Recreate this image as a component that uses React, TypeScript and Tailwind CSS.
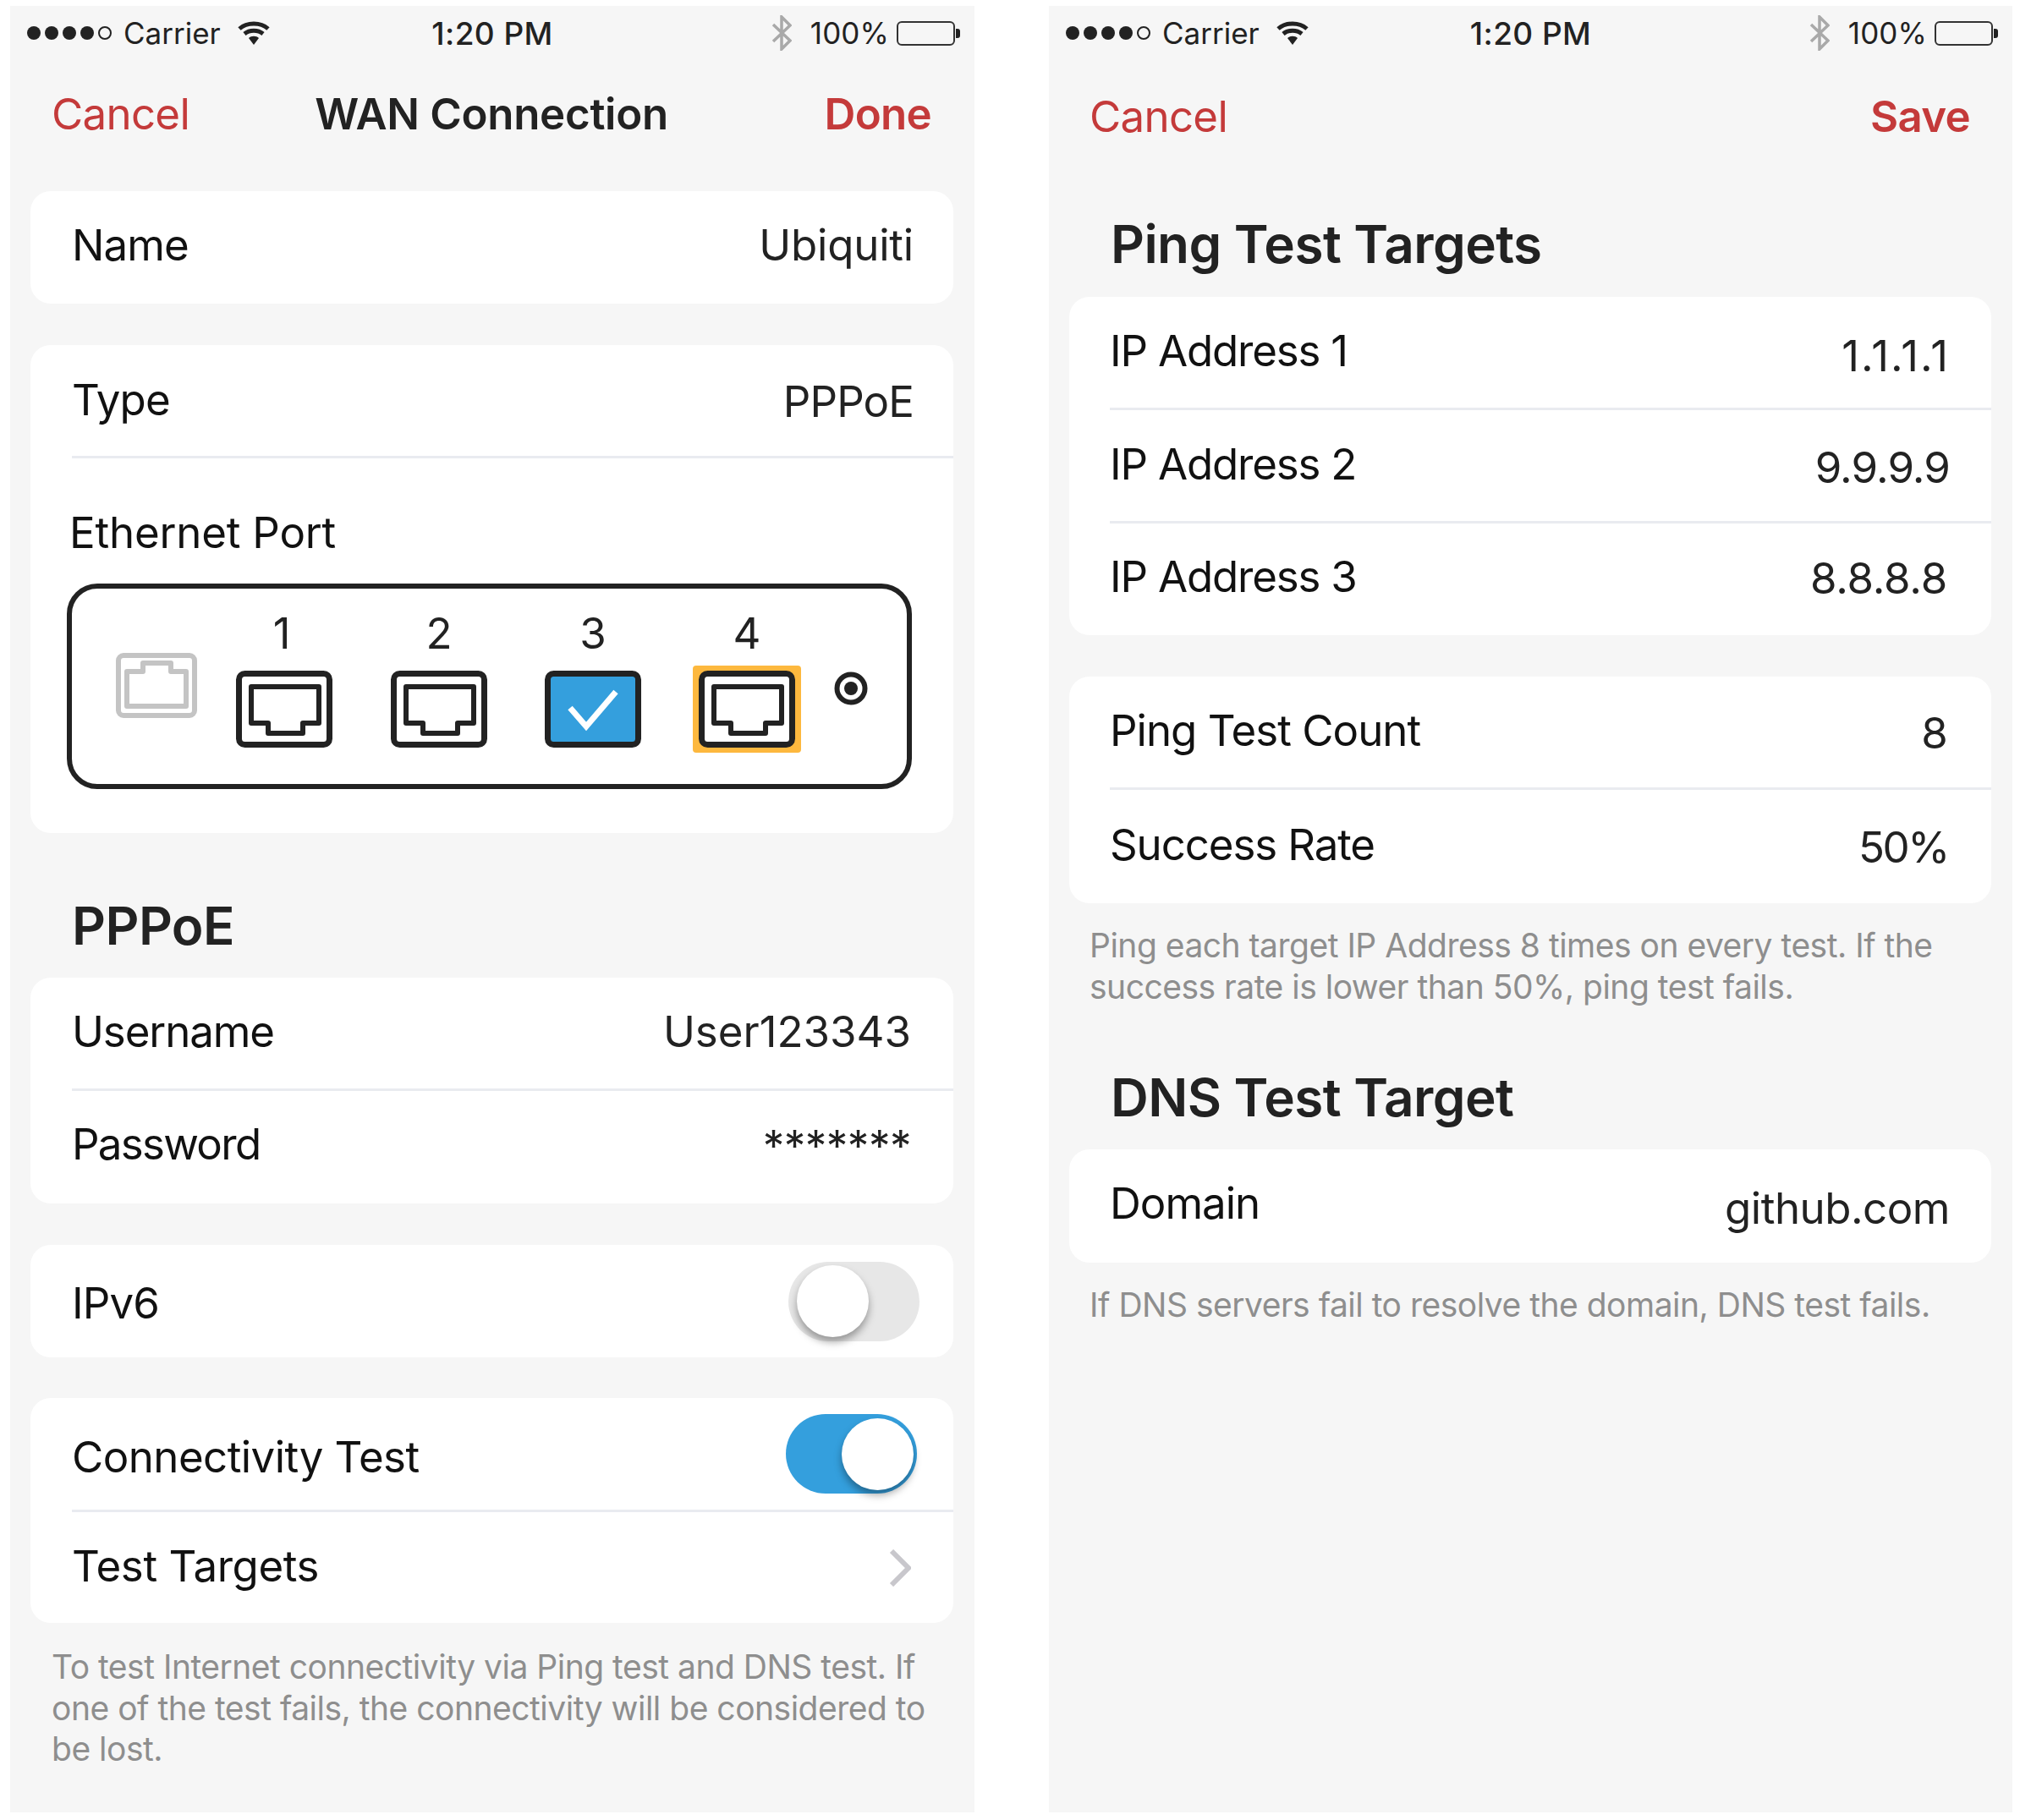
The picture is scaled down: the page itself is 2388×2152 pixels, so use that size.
import React from "react";

const font = "font-['Inter','Liberation_Sans',sans-serif]";

function Wifi() {
  return (
    <svg width="38" height="28" viewBox="0 0 38 28" className="text-[#222]">
      <path d="M2 9 C11 1 27 1 36 9" fill="none" stroke="currentColor" strokeWidth="5" />
      <path d="M8 15 C14 10 24 10 30 15" fill="none" stroke="currentColor" strokeWidth="5" />
      <path d="M13 20 C16 17 22 17 25 20 L19 28 Z" fill="currentColor" />
    </svg>
  );
}

function Bluetooth() {
  return (
    <svg width="24" height="42" viewBox="0 0 24 42">
      <path d="M2 11 L22 30 L12 40 V2 L22 12 L2 31" fill="none" stroke="#a9a9a9" strokeWidth="3.5" />
    </svg>
  );
}

function StatusBar() {
  return (
    <div className="grid h-[64px] grid-cols-[1fr_auto_1fr] items-center pl-[20px] pr-[17px] text-[35px] text-[#222]">
      <div className="flex items-center">
        <span className="flex gap-[5px]">
          <span className="h-[16px] w-[16px] rounded-full bg-[#222]" />
          <span className="h-[16px] w-[16px] rounded-full bg-[#222]" />
          <span className="h-[16px] w-[16px] rounded-full bg-[#222]" />
          <span className="h-[16px] w-[16px] rounded-full bg-[#222]" />
          <span className="h-[16px] w-[16px] rounded-full border-2 border-[#222]" />
        </span>
        <span className="ml-[14px] leading-none tracking-[0px]">Carrier</span>
        <span className="ml-[20px] flex"><Wifi /></span>
      </div>
      <span className="mr-[3px] pt-[1px] text-[37px] font-medium leading-none tracking-[0.4px]">1:20 PM</span>
      <div className="flex items-center justify-end">
        <span className="flex pr-[1px]"><Bluetooth /></span>
        <span className="ml-[21px] leading-none tracking-[0.1px]">100%</span>
        <span className="ml-[9px] h-[29px] w-[69px] rounded-[6px] border-2 border-[#333]" />
        <span className="ml-[1px] h-[11px] w-[5px] rounded-r-[3px] bg-[#222]" />
      </div>
    </div>
  );
}

function Card({ children }: { children: React.ReactNode }) {
  return <div className="ml-[24px] mr-[25px] overflow-hidden rounded-[24px] bg-white">{children}</div>;
}

function Sep({ ml = "ml-[49px]" }: { ml?: string }) {
  return <div className={`h-[3px] bg-[#e9ebf0] ${ml}`} />;
}

function Row({
  label,
  value,
  h,
  pl = "pl-[49px]",
  labelCls = "pb-[6px]",
  valueCls = "pb-[2px] pr-[47px]",
  children,
}: {
  label: string;
  value?: string;
  h: string;
  pl?: string;
  labelCls?: string;
  valueCls?: string;
  children?: React.ReactNode;
}) {
  return (
    <div className={`flex items-center justify-between text-[51px] tracking-[-0.9px] text-[#111] ${pl} ${h}`}>
      <span className={`leading-none ${labelCls}`}>{label}</span>
      {value ? <span className={`leading-none text-[#222] ${valueCls}`}>{value}</span> : null}
      {children}
    </div>
  );
}

function Title({ children, h, pl = "pl-[73px]" }: { children: React.ReactNode; h: string; pl?: string }) {
  return (
    <div className={`flex items-center text-[62px] font-semibold leading-none tracking-[-0.55px] text-[#222] ${pl} ${h}`}>
      {children}
    </div>
  );
}

function Note({ children, pad, pl = "pl-[49px]" }: { children: React.ReactNode; pad: string; pl?: string }) {
  return <p className={`pr-[30px] text-[39px] leading-[48.5px] tracking-[-0.5px] text-[#8e8e8e] ${pl} ${pad}`}>{children}</p>;
}

function PortIcon({ selected, highlighted }: { selected?: boolean; highlighted?: boolean }) {
  const svg = (
    <svg width="114" height="91" viewBox="0 0 114 91" className="block">
      <rect x="3.5" y="3.5" width="107" height="84" rx="7" fill={selected ? "#349fdd" : "#fff"} stroke="#222" strokeWidth="7" />
      {selected ? (
        <path d="M30 44 L49 66 L84 25" fill="none" stroke="#fff" strokeWidth="7" />
      ) : (
        <path d="M18 19 H98 V62 H79 V74 H38 V62 H18 Z" fill="none" stroke="#222" strokeWidth="6" strokeLinejoin="round" />
      )}
    </svg>
  );
  return highlighted ? <div className="rounded-[4px] bg-[#fdb83e] px-[7px] pb-[6px] pt-[6px]">{svg}</div> : svg;
}

function PortCol({
  n,
  cls,
  numCls = "",
  selected,
  highlighted,
}: {
  n: string;
  cls: string;
  numCls?: string;
  selected?: boolean;
  highlighted?: boolean;
}) {
  return (
    <div className={`flex flex-col items-center ${cls}`}>
      <span className={`text-[51px] leading-none text-[#222] ${numCls}`}>{n}</span>
      <div className={highlighted ? "mt-[13px]" : "mt-[19px]"}>
        <PortIcon selected={selected} highlighted={highlighted} />
      </div>
    </div>
  );
}

function EthernetBox() {
  return (
    <div className="ml-[43px] mr-[49px] flex h-[243px] rounded-[36px] border-[6px] border-[#222] pl-[52px] pt-[27px]">
      <svg width="96" height="77" viewBox="0 0 96 77" className="mt-[49px] shrink-0">
        <rect x="3" y="3" width="90" height="71" rx="6" fill="#fff" stroke="#c4c4c4" strokeWidth="6" />
        <path d="M13 22 H32 V12 H65 V22 H83 V63 H13 Z" fill="none" stroke="#c4c4c4" strokeWidth="6" strokeLinejoin="round" />
      </svg>
      <PortCol n="1" cls="ml-[46px]" numCls="pr-[6px]" />
      <PortCol n="2" cls="ml-[69px]" />
      <PortCol n="3" cls="ml-[68px]" selected />
      <PortCol n="4" cls="ml-[61px]" highlighted />
      <svg width="40" height="40" viewBox="0 0 40 40" className="ml-[39px] mt-[71px] shrink-0">
        <circle cx="20" cy="20" r="16.5" fill="#fff" stroke="#222" strokeWidth="6" />
        <circle cx="20" cy="20" r="8" fill="#222" />
      </svg>
    </div>
  );
}

function Switch({ on }: { on?: boolean }) {
  return (
    <div
      className={`flex h-[94px] w-[155px] items-center rounded-full ${
        on ? "justify-end bg-[#349fdd] pr-[4px]" : "justify-start bg-[#e7e7e7] pl-[10px]"
      }`}
    >
      <span className="h-[85px] w-[85px] rounded-full bg-white shadow-[0_6px_10px_rgba(0,0,0,0.35)]" />
    </div>
  );
}

function LeftPanel() {
  return (
    <div className={`h-[2136px] w-[1140px] bg-[#f6f6f6] ${font}`}>
      <StatusBar />
      <div className="grid h-[126px] grid-cols-[1fr_auto_1fr] items-center pl-[49px] pr-[51px] text-[51px] leading-none tracking-[-0.7px]">
        <span className="text-[#c43a3a]">Cancel</span>
        <span className="font-semibold tracking-[-0.3px] text-[#222]">WAN Connection</span>
        <span className="text-right font-semibold text-[#c43a3a]">Done</span>
      </div>
      <div className="mt-[29px]">
        <Card>
          <Row label="Name" value="Ubiquiti" h="h-[133px]" labelCls="pb-[6px]" valueCls="pb-[6px] pr-[47px] tracking-[-0.2px]" />
        </Card>
      </div>
      <div className="mt-[49px]">
        <Card>
          <Row label="Type" value="PPPoE" h="h-[131px]" labelCls="pb-[3px]" valueCls="pt-[1px] pr-[47px]" />
          <Sep />
          <div className="flex h-[148px] items-center pl-[46px] pt-[26px] text-[51px] leading-none tracking-[-0.2px] text-[#111]">
            Ethernet Port
          </div>
          <EthernetBox />
          <div className="h-[52px]" />
        </Card>
      </div>
      <Title h="h-[171px] pt-[49px]">PPPoE</Title>
      <Card>
        <Row label="Username" value="User123343" h="h-[131px]" labelCls="pb-[5px] tracking-[-1.1px]" valueCls="pb-[4px] pr-[50px] tracking-[0px]" />
        <Sep />
        <Row label="Password" value="*******" h="h-[133px]" labelCls="pb-[8px] tracking-[-1.7px]" valueCls="pb-[4px] pr-[50px] tracking-[-0.5px]" />
      </Card>
      <div className="mt-[49px]">
        <Card>
          <Row label="IPv6" h="h-[133px]" labelCls="pt-[4px]">
            <div className="mr-[40px]"><Switch /></div>
          </Row>
        </Card>
      </div>
      <div className="mt-[48px]">
        <Card>
          <Row label="Connectivity Test" h="h-[132px]" labelCls="pt-[7px] tracking-[-0.55px]">
            <div className="mr-[43px]"><Switch on /></div>
          </Row>
          <Sep />
          <Row label="Test Targets" h="h-[131px]" labelCls="pb-[4px] tracking-[-0.4px]">
            <svg width="26" height="44" viewBox="0 0 26 44" className="mr-[50px]">
              <path d="M3 2 L23 22 L3 42" fill="none" stroke="#c8c7cc" strokeWidth="6" />
            </svg>
          </Row>
        </Card>
      </div>
      <Note pad="pt-[28px]">
        To test Internet connectivity via Ping test and DNS test. If one of the test fails, the connectivity will be considered to be lost.
      </Note>
    </div>
  );
}

function RightPanel() {
  const pl = "pl-[48px]";
  const lab = "pb-[5px] tracking-[-1.2px]";
  return (
    <div className={`h-[2136px] w-[1139px] bg-[#f6f6f6] ${font}`}>
      <StatusBar />
      <div className="flex h-[132px] items-center justify-between pl-[48px] pr-[50px] text-[51px] leading-none tracking-[-0.7px]">
        <span className="text-[#c43a3a]">Cancel</span>
        <span className="font-semibold text-[#c43a3a]">Save</span>
      </div>
      <Title h="mt-[24px] h-[124px]" pl="pl-[73px]">Ping Test Targets</Title>
      <Card>
        <Row pl={pl} label="IP Address 1" value="1.1.1.1" h="h-[131px]" labelCls={lab} valueCls="pt-[7px] pr-[49px] tracking-[2px]" />
        <Sep ml="ml-[48px]" />
        <Row pl={pl} label="IP Address 2" value="9.9.9.9" h="h-[131px]" labelCls={lab} valueCls="pt-[4px] pr-[49px]" />
        <Sep ml="ml-[48px]" />
        <Row pl={pl} label="IP Address 3" value="8.8.8.8" h="h-[132px]" labelCls="pb-[7px] tracking-[-1.2px]" valueCls="pb-[3px] pr-[52px] tracking-[-0.2px]" />
      </Card>
      <div className="mt-[49px]">
        <Card>
          <Row pl={pl} label="Ping Test Count" value="8" h="h-[131px]" labelCls="pb-[4px] tracking-[-1px]" valueCls="pt-[1px] pr-[52px]" />
          <Sep ml="ml-[48px]" />
          <Row pl={pl} label="Success Rate" value="50%" h="h-[134px]" labelCls="pb-[6px] tracking-[-1.1px]" valueCls="pr-[51px] tracking-[-2.4px]" />
        </Card>
      </div>
      <Note pad="pt-[26px]" pl={pl}>
        Ping each target IP Address 8 times on every test. If the success rate is lower than 50%, ping test fails.
      </Note>
      <Title h="h-[166px] pt-[48px]" pl="pl-[73px]">DNS Test Target</Title>
      <div className="mt-[2px]">
        <Card>
          <Row pl={pl} label="Domain" value="github.com" h="h-[134px]" labelCls="pb-[8px] tracking-[-1px]" valueCls="pt-[4px] pr-[49px] tracking-[-0.5px]" />
        </Card>
      </div>
      <Note pad="pt-[26px]" pl={pl}>If DNS servers fail to resolve the domain, DNS test fails.</Note>
    </div>
  );
}

export default function App() {
  return (
    <div className="flex h-[2152px] w-[2388px] gap-[88px] bg-white pl-[12px] pt-[7px]">
      <LeftPanel />
      <RightPanel />
    </div>
  );
}
